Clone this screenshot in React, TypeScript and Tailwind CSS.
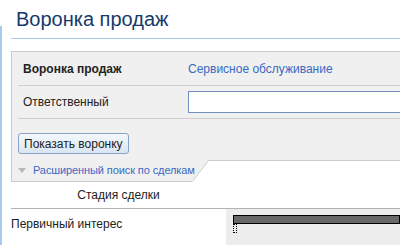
export default function App() {
  return (
    <div className="w-[400px] h-[245px] overflow-hidden bg-white flex font-['Liberation_Sans',Arial,sans-serif] text-[12px] text-[#222]">
      <div className="w-[2px] mt-[26px] bg-[#a9caec] shrink-0" />
      <div className="flex-1 pl-[9px] flex flex-col min-w-0">
        <h1 className="h-[39px] pl-[5px] pt-[6px] border-b border-[#a9caec] text-[20px] leading-[26px] text-[#16396b]">
          Воронка продаж
        </h1>

        <div className="mt-[12px] border-t border-l border-[#cbcbcb] bg-[#f0f0f0] px-[6px] pb-[6px] w-[400px]">
          <div className="flex items-center h-[34px] border-b border-[#cfcfcf]">
            <div className="w-[170px] pl-[5px] font-bold">Воронка продаж</div>
            <a className="text-[#3a68c4]">Сервисное обслуживание</a>
          </div>
          <div className="flex items-center h-[33px] border-b border-[#cfcfcf]">
            <div className="w-[170px] pl-[5px]">Ответственный</div>
            <div className="flex-1 h-[22px] border border-[#7290bd] bg-white" />
          </div>
          <div className="pt-[14px]">
            <button className="h-[21px] px-[5px] rounded-[3px] border border-[#8aa3c6] bg-gradient-to-b from-[#f4f8fc] to-[#d9e5f3] text-[12px] text-[#222] leading-none">
              Показать воронку
            </button>
          </div>
        </div>

        <div className="flex h-[22px]">
          <div className="w-[181px] shrink-0 flex items-center gap-[7px] pl-[6px] bg-[#f0f0f0] border-l border-b border-[#cbcbcb] text-[11px] text-[#3a68c4]">
            <svg width="8" height="5" viewBox="0 0 8 5" className="shrink-0">
              <path d="M0 0 H8 L4 5 Z" fill="#b8b8b8" />
            </svg>
            <span className="relative z-10 whitespace-nowrap tracking-[-0.1px]">Расширенный поиск по сделкам</span>
          </div>
          <svg width="17" height="22" viewBox="0 0 17 22" className="shrink-0">
            <path d="M0 0 H17 L0 21.5 Z" fill="#f0f0f0" />
            <path d="M0.5 21.5 L16.5 0.5" stroke="#cbcbcb" strokeWidth="1" fill="none" />
          </svg>
          <div className="flex-1 border-t border-[#cbcbcb]" />
        </div>

        <div className="flex h-[27px] items-center border-b border-[#b3b3b3]">
          <div className="w-[215px] text-center">Стадия сделки</div>
        </div>

        <div className="flex flex-1">
          <div className="w-[215px] pt-[6px]">Первичный интерес</div>
          <div className="flex-1 bg-[#ededed] pl-[7px] pt-[6px]">
            <div className="h-[9px] border border-black bg-[#686868]" />
            <div className="w-[4px] h-[9px] border border-dotted border-black" />
          </div>
        </div>
      </div>
    </div>
  );
}
